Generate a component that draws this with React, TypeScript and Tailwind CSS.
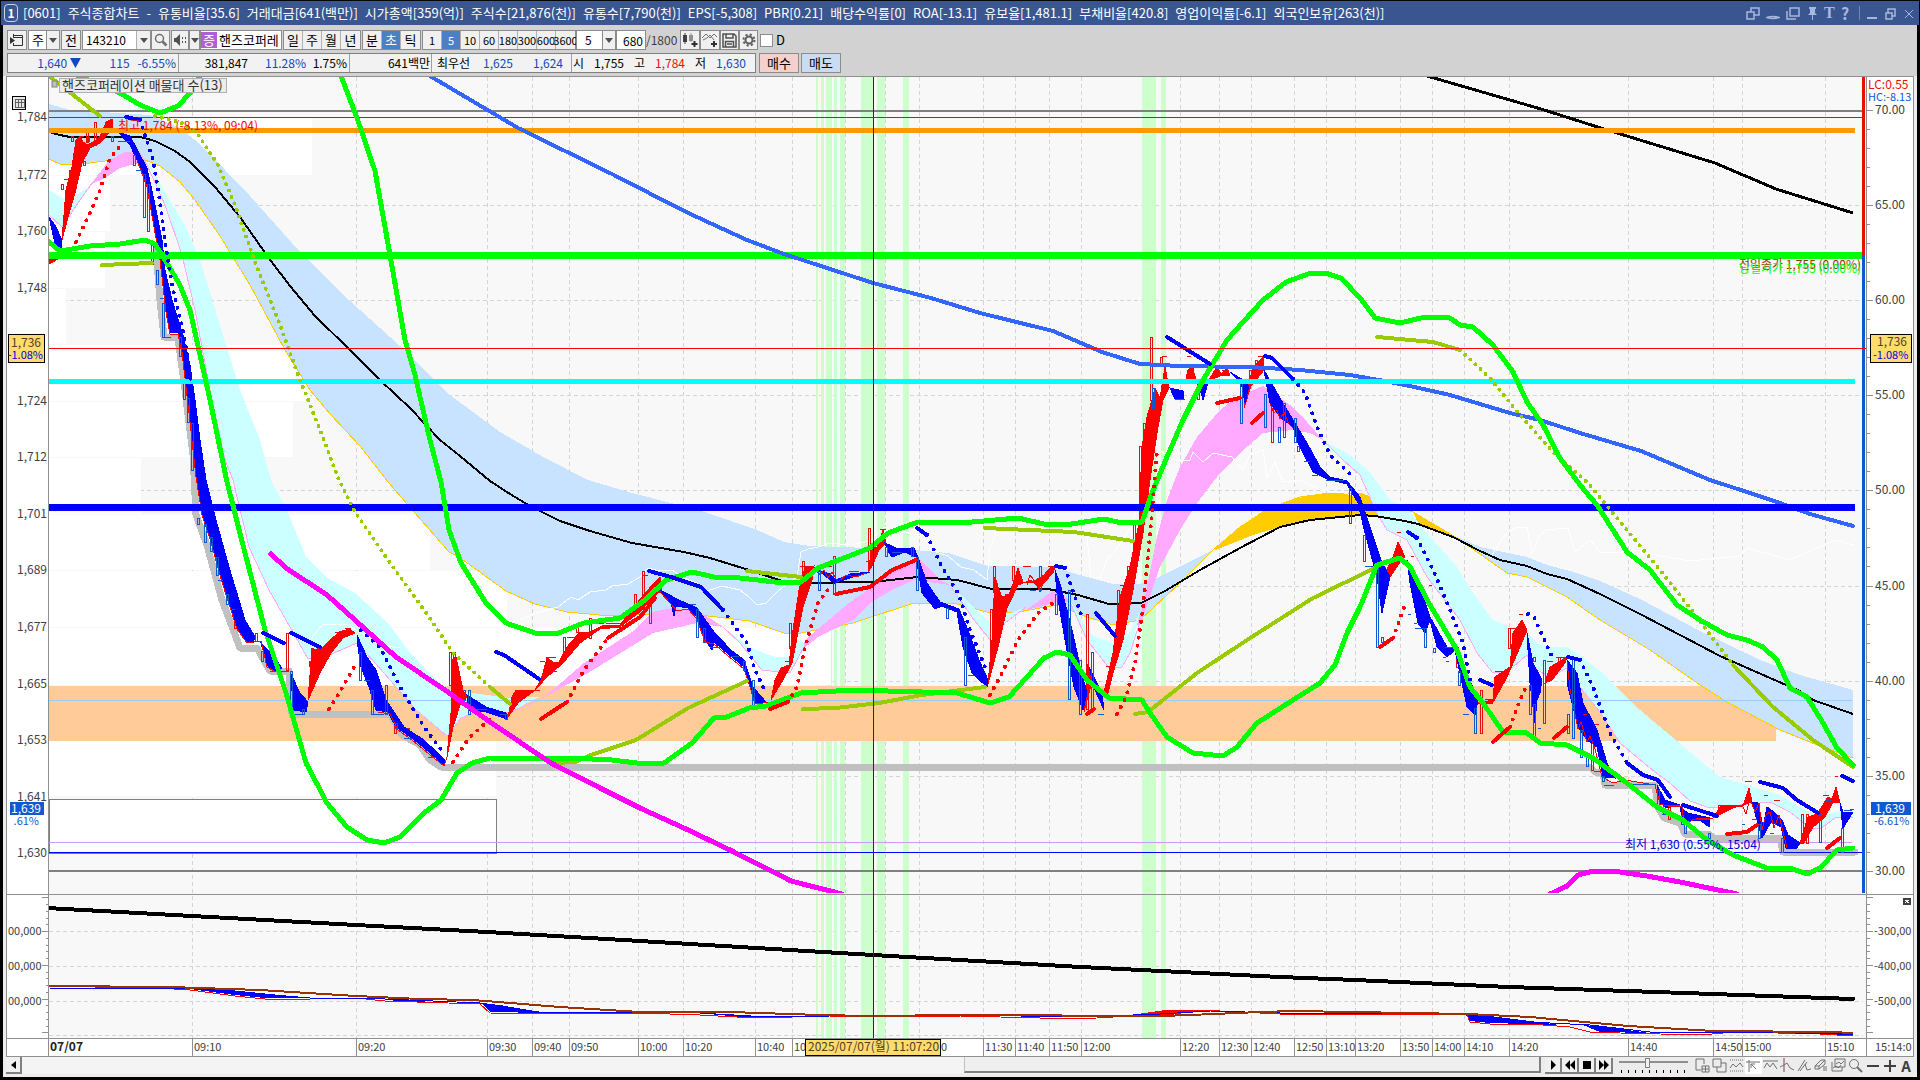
import React from "react";

type Pt = string;

const FONT = "font-['Noto_Sans_CJK_KR',sans-serif]";

const VLINES: [number, string][] = [
  [192, "09:10"], [356, "09:20"], [487, "09:30"], [532, "09:40"], [569, "09:50"],
  [638, "10:00"], [683, "10:20"], [755, "10:40"], [792, "10:50"], [845, ""],
  [885, ""], [919, "11:20"], [983, "11:30"], [1015, "11:40"], [1049, "11:50"],
  [1081, "12:00"], [1180, "12:20"], [1219, "12:30"], [1251, "12:40"], [1294, "12:50"],
  [1326, "13:10"], [1355, "13:20"], [1400, "13:50"], [1432, "14:00"], [1464, "14:10"],
  [1509, "14:20"], [1628, "14:40"], [1713, "14:50"], [1742, "15:00"], [1825, "15:10"],
];

const LEFT_LABELS: [number, string][] = [
  [116, "1,784"], [174, "1,772"], [230, "1,760"], [287, "1,748"], [400, "1,724"],
  [456, "1,712"], [513, "1,701"], [569, "1,689"], [626, "1,677"], [683, "1,665"],
  [739, "1,653"], [796, "1,641"], [852, "1,630"],
];

const RIGHT_LABELS: [number, string][] = [
  [110, "70.00"], [205, "65.00"], [300, "60.00"], [395, "55.00"], [490, "50.00"],
  [586, "45.00"], [681, "40.00"], [776, "35.00"], [871, "30.00"],
];

const VOLUME_BLOCKS = [
  [119, 176, 312], [176, 232, 110], [232, 289, 105], [289, 345, 66], [345, 402, 310],
  [402, 458, 293], [458, 515, 141], [515, 571, 430], [571, 628, 507], [628, 686, 831],
  [741, 797, 496],
];

const STRIPES = [
  [816, 2], [821, 3], [826, 6], [834, 3], [840, 5], [861, 13], [877, 8], [903, 6],
  [1142, 14], [1161, 5],
];

const SKY_CLOUD: Pt =
  "49,104 70,110 150,115 180,128 200,144 250,196 300,252 350,301 400,346 450,395 500,432 545,458 588,480 632,493 671,503 705,512 757,530 784,542 810,546 870,548 914,550 948,553 987,566 1052,567 1087,577 1113,584 1140,584 1157,578 1213,550 1180,583 1140,620 1113,625 1087,617 1057,605 1018,612 987,612 953,603 914,603 853,623 801,633 784,633 749,621 684,613 610,616 567,612 535,604 506,591 459,557 449,552 408,505 388,482 360,446 330,414 310,390 285,350 250,285 220,236 195,200 180,182 160,166 145,160 120,159 90,163 75,165 60,164 49,159";
const SKY_CLOUD_2: Pt =
  "1440,528 1453,535 1480,547 1527,557 1547,565 1570,571 1600,581 1640,599 1700,631 1760,660 1800,675 1853,690 1853,758 1820,746 1780,730 1727,702 1700,685 1650,650 1600,620 1567,597 1527,577 1507,573 1460,540";
const YELLOW_LINE: Pt =
  "49,159 60,164 75,165 90,163 120,159 145,160 160,166 180,182 195,200 220,236 250,285 285,350 310,390 330,414 360,446 388,482 408,505 449,552 459,557 506,591 535,604 567,612 610,616 684,613 749,621 784,633 801,633 853,623 914,603 953,603 987,612 1018,612 1057,605 1087,617 1113,625 1140,620 1180,583 1213,550 1240,527 1270,508 1300,497 1330,493 1360,493 1385,503 1413,512 1447,532 1460,540 1507,573 1527,577 1567,597 1600,620 1650,650 1700,685 1727,702 1780,730 1820,746 1853,758";
const GOLD: Pt[] = [
  "1213,551 1240,527 1263,511 1293,499 1320,494 1357,493 1373,497 1380,517 1353,516 1297,522 1253,535",
  "1413,512 1430,522 1447,532 1455,537 1440,531 1420,527",
];

const CYAN_CLOUDS: Pt[] = [
  "49,190 62,198 75,196 90,186 80,200 70,215 62,227 49,215",
  "147,160 170,201 185,225 200,260 220,325 240,390 260,440 271,480 286,508 306,557 327,578 355,593 388,623 408,650 433,677 449,690 510,698 539,697 508,713 482,710 461,718 447,736 416,710 384,673 357,643 327,656 308,659 290,627 269,590 249,547 233,480 225,460 210,390 195,310 182,255 165,205",
  "723,627 749,647 775,657 790,657 800,640 805,645 790,673 762,670 740,643",
  "950,585 961,595 979,613 992,623 1005,615 1026,607 1005,623 992,642 974,620",
  "1070,600 1091,635 1113,643 1130,632 1140,612 1130,653 1122,667 1109,668 1087,640",
  "1323,440 1350,455 1370,472 1390,500 1407,508 1427,533 1457,567 1473,593 1493,620 1513,628 1527,633 1537,643 1547,647 1567,647 1580,655 1600,671 1640,710 1690,752 1720,777 1750,786 1780,795 1800,807 1820,817 1835,812 1853,810 1853,817 1835,818 1820,829 1810,828 1790,812 1770,802 1740,805 1710,808 1690,801 1670,783 1650,768 1620,743 1600,712 1580,687 1567,668 1550,677 1537,670 1527,655 1507,672 1493,673 1477,653 1460,620 1427,577 1407,540 1387,530 1377,513 1360,475 1343,460",
];
const PINK_LINES: Pt[] = [
  "49,215 62,227 70,215 80,200 90,186 110,160",
  "140,153 147,165 165,205 182,255 195,310 210,390 225,460 233,480 249,547 269,590 290,627 308,659 327,656 357,643 384,673 416,710 447,736 461,718 482,710 508,713 539,700",
  "723,627 740,643 762,670 790,673 805,645",
  "950,585 974,620 992,642 1005,623 1026,607",
  "1070,602 1087,640 1109,668 1122,667 1130,653 1143,612",
  "1323,440 1343,460 1360,475 1377,513 1387,530 1407,540 1427,577 1460,620 1477,653 1493,673 1507,672 1527,655 1537,670 1550,677 1567,668 1580,687 1600,712 1620,743 1650,768 1670,783 1690,801 1710,808 1740,805 1770,802 1790,812 1810,828 1820,829 1835,818 1853,817",
];
const PINK_CLOUDS: Pt[] = [
  "90,185 110,160 125,152 140,152 147,165 135,164 120,168 105,178",
  "539,700 555,688 584,663 632,632 653,612 672,608 697,610 723,627 697,623 653,633 588,673",
  "805,640 849,603 896,570 918,558 940,580 950,585 914,580 892,590 870,603 853,620 818,637 803,649",
  "1026,610 1057,588 1070,602 1057,602",
  "1137,625 1143,607 1157,537 1167,500 1180,467 1197,437 1220,410 1237,397 1263,386 1280,398 1293,407 1307,422 1323,440 1310,433 1293,430 1263,433 1240,453 1220,473 1197,503 1180,530 1160,567 1142,620",
];

const BLACK_MA: Pt =
  "49,132 60,135 70,137 90,137 140,137 155,141 175,151 190,162 215,187 240,217 268,257 290,286 315,316 350,350 380,380 410,408 440,440 460,456 490,481 510,494 530,506 560,521 590,531 632,543 684,552 710,558 749,570 782,581 801,583 873,582 918,577 957,580 992,589 1048,589 1078,595 1109,604 1141,603 1165,591 1200,570 1240,548 1280,527 1310,520 1360,515 1375,516 1405,521 1418,524 1453,537 1480,551 1500,560 1527,566 1547,574 1567,579 1600,594 1640,614 1720,656 1770,678 1800,691 1813,700 1853,714";
const BLUE_MA: Pt =
  "430,76 518,128 612,174 686,212 747,240 784,254 873,283 931,298 980,313 1053,331 1102,352 1140,364 1180,366 1250,367 1300,370 1350,375 1390,382 1410,386 1450,395 1510,413 1540,420 1580,433 1641,451 1710,480 1750,493 1780,503 1810,514 1853,526";
const GREEN_BANDS: Pt[] = [
  "74,74 120,93 140,105 160,113 178,106 190,93 200,76",
  "341,76 357,118 375,171 390,255 405,340 415,375 430,440 441,482 449,530 461,563 486,603 506,623 535,633 559,633 584,623 620,618 645,600 666,580 692,572 714,577 740,578 784,583 801,582 818,568 870,548 888,533 918,522 961,523 1018,518 1044,524 1065,525 1104,519 1122,523 1142,522 1152,493 1167,457 1183,420 1203,380 1227,340 1243,322 1263,300 1286,282 1308,274 1325,273 1341,278 1360,298 1375,318 1400,323 1425,317 1450,318 1460,325 1473,327 1493,345 1513,372 1527,402 1543,425 1560,458 1580,485 1597,505 1627,552 1650,570 1677,605 1700,620 1727,635 1747,640 1763,647 1777,660 1790,688 1807,697 1823,723 1837,748 1853,765",
  "49,242 60,251 90,246 120,244 145,240 155,244 165,260 180,285 190,310 200,355 210,400 227,482 245,553 265,630 286,693 306,763 327,803 347,827 367,840 384,843 400,837 424,813 441,800 457,773 472,763 490,758 531,759 571,758 612,760 645,764 664,763 692,743 714,718 727,717 749,708 766,706 801,693 853,690 957,693 990,703 1009,697 1044,658 1057,652 1070,655 1087,680 1109,698 1142,700 1150,713 1167,737 1193,753 1223,756 1237,747 1257,723 1293,700 1320,683 1335,665 1347,633 1360,607 1377,565 1400,558 1410,567 1430,605 1457,650 1470,687 1483,703 1503,732 1527,733 1540,743 1567,745 1593,758 1627,783 1657,807 1683,820 1707,840 1733,855 1767,868 1790,868 1807,874 1820,868 1837,850 1853,848",
];
const OLIVE_SOLID: Pt[] = [
  "49,76 100,116",
  "102,265 152,263",
  "490,687 510,704",
  "555,763 576,762 588,756 636,740 688,708 747,681",
  "747,571 801,577",
  "803,709 836,708 879,703 922,695 985,687",
  "985,528 1074,532 1133,541",
  "1135,714 1148,712 1197,673 1247,640 1313,598 1375,568",
  "1377,337 1433,342 1460,350",
  "1733,665 1773,707 1813,740 1853,767",
];
const OLIVE_DOTS: Pt[] = [
  "155,116 180,122 197,133 218,165 235,205 255,262 280,325 297,372 320,430 339,480 355,512 388,560 429,617 453,653 490,687",
  "1460,350 1490,378 1520,415 1553,452 1587,482 1627,530 1660,570 1690,608 1733,665",
];
const MAGENTA: Pt[] = [
  "271,554 286,568 327,595 355,620 396,657 445,690 490,722 551,763 604,790 640,808 686,829 730,850 791,881 842,894",
  "1550,894 1567,886 1578,875 1593,871 1613,871 1647,876 1680,882 1737,894",
];
const SUPPORT: Pt =
  "156,250 160,300 164,337 178,338 185,390 193,455 196,515 207,545 222,600 240,648 257,648 270,671 289,671 292,714 390,714 402,735 420,745 430,760 441,767 1590,767 1595,772 1603,773 1605,785 1655,785 1658,807 1664,818 1680,823 1685,834 1708,834 1714,838 1780,838 1783,852 1855,852";

const PRICE_BLUE: Pt[] = [
  "49,217 55,225 61,238 62,250 56,248 52,230",
  "118,132 130,136 140,155 147,168 155,205 162,240 165,270 172,300 183,335 190,365 195,400 200,440 206,480 216,520 229,567 245,620 255,637 253,642 247,642 237,627 222,580 210,537 202,513 196,475 190,420 182,350 178,332 170,333 166,310 160,258 154,225 147,185 137,160 130,145",
  "261,643 271,653 282,668 276,672 267,665",
  "290,672 300,693 308,702 306,712 294,710",
  "357,635 367,657 376,670 386,700 404,727 424,740 445,760 444,765 429,752 412,738 396,727 388,712 376,710 369,687 361,667 358,647",
  "467,695 486,707 506,713 507,719 486,712 469,710",
  "660,590 679,600 697,608 714,632 731,650 744,660 753,687 766,702 755,702 751,687 744,667 727,653 714,642 712,650 705,640 697,617 688,608 676,606 674,616 671,603",
  "818,570 830,574 836,580 850,574 870,572 850,578 834,583",
  "885,543 896,548 914,548 920,563 927,583 940,602 959,609 968,630 979,660 988,680 987,687 972,673 963,647 957,612 942,606 935,609 922,593 916,557 905,552 892,557 888,551",
  "1055,570 1061,587 1072,630 1081,670 1087,693 1083,710 1074,687 1065,640 1057,593",
  "1089,667 1102,693 1104,710 1095,690",
  "1170,388 1183,391 1183,399 1175,399",
  "1198,382 1208,383 1203,400",
  "1230,372 1243,380 1249,386 1245,403 1241,382",
  "1264,370 1280,398 1293,420 1307,443 1320,467 1330,477 1347,481 1360,497 1370,527 1382,563 1390,577 1382,613 1377,577 1365,533 1358,503 1347,484 1327,479 1313,472 1298,443 1293,427 1280,417 1270,403",
  "1407,560 1420,587 1430,617 1447,647 1457,648 1463,663 1478,700 1475,715 1467,707 1460,673 1455,650 1447,657 1437,647 1430,620 1425,633 1418,623 1410,583",
  "1527,633 1533,663 1542,680 1540,693 1537,700 1535,723 1530,683",
  "1567,660 1577,673 1583,703 1597,730 1607,763 1615,778 1603,777 1597,747 1587,740 1578,727 1568,687",
  "1657,785 1665,800 1680,805 1667,808 1660,803",
  "1680,807 1688,813 1710,818 1709,827 1700,820 1690,820 1683,823",
  "1752,802 1758,803 1763,827 1767,807 1775,813 1782,820 1788,835 1800,843 1797,848 1786,848 1781,827 1771,822 1762,838",
  "1840,803 1843,812 1853,812 1843,828",
];
const PRICE_RED: Pt[] = [
  "49,264 49,258 58,259",
  "62,240 66,190 72,167 76,140 80,136 83,142 87,145 97,140 102,133 106,122 112,119 113,128 100,143 90,148 82,163 75,193 70,210",
  "308,700 312,650 322,648 339,632 349,629 355,633 343,638 331,653 320,673",
  "447,757 451,713 452,660 456,657 463,690 467,697 461,702 453,727",
  "508,717 512,697 516,690 535,690 541,680 547,658 553,662 559,662 567,647 580,632 588,633 604,625 620,625 633,608 645,593 660,577 662,590 653,597 640,612 620,627 600,629 580,643 563,663 547,677 535,690 518,703",
  "771,700 775,680 781,668 789,665 792,637 799,590 805,567 814,566 812,580 803,607 792,663 783,680",
  "868,572 872,548 877,547 883,530 886,543 879,550 872,566",
  "988,684 992,640 995,577 999,590 1002,597 1009,595 1015,578 1018,568 1023,582 1031,583 1044,575 1050,568 1055,567 1053,573 1039,588 1031,580 1018,585 1007,608 998,647",
  "1084,712 1088,664 1092,682 1087,700",
  "1104,693 1113,653 1120,597 1130,567 1139,523 1142,447 1147,417 1152,400 1155,388 1160,398 1165,367 1169,388 1163,400 1157,433 1150,480 1143,533 1133,590 1123,640 1113,673 1107,697",
  "1185,383 1188,370 1192,365 1197,384",
  "1208,381 1217,367 1221,374 1227,368 1230,375 1220,376",
  "1244,408 1247,390 1253,367 1263,357 1264,370 1251,386",
  "1383,577 1393,557 1398,542 1405,557 1400,562 1390,577",
  "1478,703 1493,700 1495,677 1510,667 1513,633 1522,620 1527,630 1520,647 1507,677 1492,704",
  "1545,683 1550,667 1567,657 1565,663 1552,680",
  "1713,818 1720,807 1743,806 1749,788 1752,802 1733,808",
  "1800,843 1808,817 1817,814 1828,797 1832,799 1836,787 1840,803 1833,802 1825,817 1813,827 1804,843",
];
const FAST_RED: Pt[] = [
  "137,160 147,187 154,227 160,260 166,312 170,334 178,334 182,352 190,422 196,477 202,515 210,539 222,582 237,629 247,643 261,641 267,667 276,672 289,671",
  "378,712 390,714 398,730 412,740 429,754 444,766 447,757",
  "660,592 671,604 677,611 688,609 697,619 705,642 714,644 727,655 744,669 751,690 755,704 771,702",
  "814,567 820,575 824,570 828,578 832,572 838,582 846,575 856,577 866,573",
  "1027,585 1030,575 1036,583 1040,592 1044,580",
  "1270,404 1274,413 1277,410 1280,419 1284,412 1289,424 1293,428",
  "1567,662 1570,689 1578,729 1581,722 1587,742 1590,736 1595,749 1602,777 1613,783 1625,780 1655,785 1660,804 1668,806 1682,807 1684,824 1698,818 1713,818",
  "1743,807 1746,814 1750,799 1755,812 1759,803 1762,830 1766,815 1770,812 1774,828 1779,815 1784,836 1787,848",
];

const BLUE_DOTS: Pt[] = [
  "140,120 147,141 153,160 160,202 166,248 173,290 183,330 188,360 193,400",
  "361,630 380,647 400,687 424,727 445,755",
  "723,610 747,643 755,670 766,693",
  "927,535 942,567 959,595 970,630 987,672",
  "1065,568 1083,620",
  "1293,379 1305,393 1317,427 1330,455 1350,474",
  "1417,538 1433,570 1450,610 1463,643 1470,680",
  "1528,614 1534,617 1552,657",
  "1580,660 1593,687 1610,733 1627,763",
];
const BLUE_SOLID_DOTS: Pt[] = [
  "126,117 140,120", "263,633 284,643", "291,633 320,647", "496,652 504,655 539,679",
  "649,571 671,577 701,587 723,610", "917,528 927,535", "1056,566 1065,568",
  "1096,613 1115,636", "1167,337 1210,364", "1265,356 1272,358 1293,379",
  "1408,532 1417,538", "1480,680 1492,685", "1568,657 1580,660",
  "1627,763 1643,775 1658,780 1670,797", "1683,805 1717,816",
  "1760,782 1783,788 1797,800 1818,813", "1842,776 1853,781",
];
const RED_DOTS: Pt[] = [
  "76,242 90,213 100,190 110,158 123,143",
  "329,709 341,690 357,662",
  "453,762 469,738 494,715",
  "567,702 584,670 608,638",
  "788,702 797,687 805,647 818,603 829,588",
  "990,695 1000,677 1018,640 1039,612 1053,603",
  "1117,714 1126,697 1135,663 1143,608 1152,513 1157,450",
  "1393,638 1406,602",
  "1510,727 1520,700 1526,687",
];
const RED_SOLID_DOTS: Pt[] = [
  "541,719 567,702", "608,638 640,617 655,598", "770,709 788,702",
  "836,594 870,587 892,570 916,560", "1087,714 1094,709", "1217,403 1240,398",
  "1252,423 1263,413", "1380,647 1393,638", "1493,742 1510,727", "1554,738 1567,727",
  "1727,834 1747,832 1757,825", "1827,848 1840,838",
];

const WHITE_LINES: Pt[] = [
  "520,620 540,612 558,607 571,597 578,600 590,592 606,590 612,586 628,584 640,577 648,568 660,571 672,570 684,578 697,583 704,592 722,586 740,590 748,596 757,605 766,603 779,590 797,577 801,552 808,549 818,547 830,543 850,545 870,541 884,527 892,530 914,534 927,536 930,550 948,556 961,567 974,570 987,580 990,548 996,532",
  "1087,535 1091,577 1100,578 1107,560 1124,540 1137,510",
  "1145,464 1151,440 1160,450 1172,460 1190,460 1193,452 1203,462 1213,453 1232,457 1243,470 1250,455 1263,450 1267,478 1275,462 1283,482 1300,480 1320,490 1344,493 1360,497",
  "1490,558 1505,535 1515,528 1527,527 1532,553 1540,535 1546,530 1568,528 1575,552 1590,540 1600,552 1650,554 1690,561 1740,556 1747,548 1790,560 1812,550 1836,540 1853,545",
  "310,640 322,625 345,624 362,633 380,645 400,648",
];

const CANDLES_RED: [number, number, number][] = [
  [62, 184, 189], [70, 170, 178], [72, 136, 141], [87, 131, 142], [95, 122, 145], [256, 633, 641],
  [287, 633, 670], [310, 661, 666], [312, 648, 656], [235, 618, 628], [395, 723, 733], [408, 728, 735],
  [450, 652, 685], [454, 652, 666], [564, 637, 652], [577, 623, 632], [590, 618, 638],
  [635, 594, 612], [643, 571, 596], [803, 561, 585], [790, 623, 648], [834, 556, 594],
  [869, 528, 566], [994, 566, 592], [991, 609, 660], [1013, 566, 580], [1087, 614, 709],
  [1118, 590, 620], [1128, 566, 590], [1134, 523, 555], [1140, 446, 500], [1144, 423, 445],
  [1151, 337, 400], [1161, 357, 364], [1192, 366, 380], [1250, 370, 385], [1272, 389, 442], [1279, 398, 411],
  [1256, 360, 366], [1384, 567, 574], [1457, 647, 667], [1481, 690, 733], [1509, 628, 648],
  [1534, 657, 661], [1592, 723, 770], [1559, 657, 664], [1664, 805, 814], [1669, 805, 819], [1719, 805, 814],
  [1802, 814, 840], [1807, 814, 843],
];
const CANDLES_BLUE: [number, number, number][] = [
  [84, 161, 165], [88, 137, 141], [112, 136, 141], [134, 155, 165], [144, 174, 217], [148, 184, 231],
  [152, 241, 264], [157, 270, 284], [163, 303, 337], [180, 337, 356], [184, 380, 399], [188, 398, 422],
  [192, 423, 470], [198, 518, 524], [205, 524, 542], [211, 537, 551], [217, 557, 575], [227, 594, 604],
  [262, 651, 661], [291, 671, 714], [303, 709, 714], [360, 652, 680], [372, 690, 714], [386, 685, 714],
  [396, 723, 728], [464, 690, 700], [469, 690, 714], [506, 714, 719], [650, 604, 623], [697, 609, 637],
  [704, 628, 642], [744, 661, 670], [753, 680, 709], [819, 566, 590], [886, 547, 556], [912, 547, 556], [917, 557, 590],
  [947, 608, 618], [965, 637, 685], [1040, 566, 590], [1056, 594, 614], [1069, 590, 699], [1080, 660, 714], [1092, 652, 708],
  [1153, 388, 408], [1198, 389, 399], [1241, 380, 423], [1265, 394, 427], [1279, 427, 442],
  [1284, 403, 437], [1295, 418, 442], [1298, 446, 451], [1350, 488, 523], [1364, 535, 561],
  [1377, 567, 647], [1382, 637, 642], [1425, 628, 647], [1434, 648, 652], [1459, 671, 685],
  [1475, 708, 733], [1530, 685, 714], [1534, 704, 738], [1544, 660, 723], [1568, 714, 733],
  [1573, 657, 738], [1581, 730, 757], [1587, 757, 766], [1603, 776, 781], [1658, 790, 809],
  [1682, 815, 824], [1685, 824, 833], [1709, 833, 838], [1759, 824, 838], [1782, 838, 852], [1820, 814, 842],
  [1842, 828, 852],
];
const TICKS_RED: [number, number, number][] = [
  [64, 179, 8], [79, 136, 5], [335, 632, 6], [345, 628, 6], [532, 690, 8], [540, 661, 5], [546, 657, 10],
  [567, 637, 8], [594, 623, 10], [606, 623, 14], [642, 575, 6], [785, 661, 8], [800, 590, 6], [800, 566, 10],
  [826, 566, 6], [866, 561, 6], [880, 529, 6], [1005, 594, 6], [1023, 566, 8], [1048, 566, 12], [1106, 666, 4],
  [1120, 585, 6], [1162, 356, 5], [1187, 356, 4], [1215, 365, 6], [1222, 370, 6], [1258, 356, 6], [1397, 532, 4],
  [1411, 556, 3], [1429, 585, 3], [1445, 647, 12], [1485, 699, 8], [1495, 671, 12], [1511, 628, 14],
  [1519, 614, 4], [1547, 661, 6], [1556, 657, 12], [1583, 714, 4], [1595, 724, 4], [1720, 805, 22],
  [1745, 781, 7], [1764, 795, 4], [1774, 800, 6], [1823, 795, 6], [1835, 776, 3], [1850, 809, 4], [1668, 805, 12], [1692, 819, 18],
];
const TICKS_BLUE: [number, number, number][] = [
  [118, 141, 12], [136, 170, 6], [160, 298, 4], [165, 337, 6], [218, 580, 5], [232, 609, 3], [270, 671, 18], [295, 714, 10],
  [364, 680, 6], [372, 714, 12], [404, 738, 8], [428, 757, 8], [475, 709, 12], [500, 714, 8], [553, 671, 4], [690, 604, 6],
  [710, 647, 10], [731, 656, 8], [849, 571, 10], [892, 552, 10], [968, 675, 6], [1098, 714, 6], [1030, 590, 6],
  [1175, 399, 10], [1225, 380, 14], [1304, 461, 6], [1312, 475, 6], [1326, 480, 18], [1365, 566, 8], [1408, 614, 3],
  [1414, 623, 3], [1415, 628, 10], [1443, 657, 3], [1446, 661, 3], [1463, 714, 6], [1538, 728, 3], [1594, 771, 8],
  [1604, 785, 10], [1632, 784, 24], [1662, 814, 6], [1742, 824, 3], [1752, 819, 5], [1770, 833, 4], [1826, 800, 6], [1844, 810, 8],
];

function Lines({ list, color, width, dots }: { list: Pt[]; color: string; width: number; dots?: string }) {
  return (
    <g fill="none" stroke={color} strokeWidth={width} strokeLinecap={dots || width > 3 ? "round" : "butt"} strokeLinejoin="round" strokeDasharray={dots}>
      {list.map((p) => <polyline key={p} points={p} />)}
    </g>
  );
}

function HLine({ y, x2 = 1863, color, w = 1 }: { y: number; x2?: number; color: string; w?: number }) {
  return <rect x={49} y={y} width={x2 - 49} height={w} fill={color} />;
}

function Plot() {
  return (
    <svg viewBox="49 77 1817 961" preserveAspectRatio="none" className="block min-w-0 flex-1 h-full bg-[#f8f8f8]" shapeRendering="crispEdges" role="img" aria-label="핸즈코퍼레이션 주가 차트">
      <defs>
        <clipPath id="main-panel"><rect x={49} y={77} width={1817} height={816} /></clipPath>
      </defs>
      <g stroke="#d4d4d4" strokeDasharray="4 3">
        {VLINES.map(([x]) => <line key={x} x1={x + 0.5} x2={x + 0.5} y1={77} y2={1038} />)}
        {[205, 300, 395, 490, 586, 681, 776].map((y) => <line key={y} x1={49} x2={1863} y1={y + 0.5} y2={y + 0.5} />)}
        {[931, 966, 1001, 1035].map((y) => <line key={y} x1={49} x2={1863} y1={y + 0.5} y2={y + 0.5} />)}
      </g>
      {STRIPES.map(([x, w]) => <rect key={x} x={x} y={77} width={w} height={961} fill="#ccffcc" />)}
      {VOLUME_BLOCKS.map(([a, b, x]) => <rect key={a} x={49} y={a} width={x - 49} height={b - a - 1} fill="#fff" />)}
      <rect x={49} y={799} width={447} height={54} fill="#fff" stroke="#808080" />
      <rect x={49} y={686} width={1727} height={55} fill="#ffcc99" />
      <g clipPath="url(#main-panel)">
        <polygon points={SKY_CLOUD} fill="#c8e3ff" />
        <polygon points={SKY_CLOUD_2} fill="#c8e3ff" />
        {GOLD.map((p) => <polygon key={p} points={p} fill="#ffcc00" />)}
        <Lines list={[YELLOW_LINE]} color="#ffcc00" width={1} />
        {CYAN_CLOUDS.map((p) => <polygon key={p} points={p} fill="#ccffff" />)}
        {PINK_CLOUDS.map((p) => <polygon key={p} points={p} fill="#ffaaff" />)}
        <Lines list={PINK_LINES} color="#ffaaff" width={1} />
        <Lines list={WHITE_LINES} color="#ffffff" width={1} />
        <Lines list={[SUPPORT]} color="#c0c0c0" width={7} />
        <HLine y={110} color="#808080" w={2} />
        <HLine y={870} color="#808080" w={2} />
        <HLine y={700} x2={1852} color="#99ccff" />
        <HLine y={842} x2={1852} color="#cc99ff" />
        <HLine y={852} color="#0000ff" />
        <HLine y={117} color="#ff0000" />
        <Lines list={["1427,76 1541,109 1604,129 1715,163 1776,189 1853,213"]} color="#000000" width={3} />
        <Lines list={[BLACK_MA]} color="#000000" width={2} />
        <g fill="none" stroke="#e01010">
          {CANDLES_RED.map(([x, a, b]) => <rect key={`${x}-${a}`} x={x - 0.5} y={a + 0.5} width={2} height={b - a} />)}
        </g>
        {PRICE_RED.map((p) => <polygon key={p} points={p} fill="#ff0000" stroke="#ff0000" strokeWidth={1} />)}
        {PRICE_BLUE.map((p) => <polygon key={p} points={p} fill="#0000ff" stroke="#0000ff" strokeWidth={1} />)}
        <Lines list={FAST_RED} color="#ff0000" width={1} />
        <g fill="none" stroke="#1058d0">
          {CANDLES_BLUE.map(([x, a, b]) => <rect key={`${x}-${a}`} x={x - 0.5} y={a + 0.5} width={2} height={b - a} />)}
        </g>
        {TICKS_RED.map(([x, y, w]) => <rect key={`${x}-${y}`} x={x} y={y} width={w} height={1} fill="#e01010" />)}
        {TICKS_BLUE.map(([x, y, w]) => <rect key={`${x}-${y}`} x={x} y={y} width={w} height={1} fill="#1058d0" />)}
        <HLine y={128} x2={1855} color="#ff9900" w={5} />
        <HLine y={252} color="#00ff00" w={7} />
        <Lines list={[BLUE_MA]} color="#3366ff" width={4} />
        <HLine y={379} x2={1855} color="#00ffff" w={5} />
        <HLine y={504} x2={1855} color="#0000ff" w={7} />
        <Lines list={OLIVE_SOLID} color="#99cc00" width={4} />
        <Lines list={OLIVE_DOTS} color="#99cc00" width={4} dots="0 7" />
        <Lines list={GREEN_BANDS} color="#00ff00" width={5} />
        <Lines list={RED_DOTS} color="#ff0000" width={4} dots="0 8" />
        <Lines list={RED_SOLID_DOTS} color="#ff0000" width={4} />
        <Lines list={BLUE_DOTS} color="#0000ff" width={4} dots="0 8" />
        <Lines list={BLUE_SOLID_DOTS} color="#0000ff" width={4} />
        <Lines list={MAGENTA} color="#ff00ff" width={5} />
        <rect x={1862} y={77} width={3} height={178} fill="#e81000" />
        <rect x={1862} y={255} width={3} height={638} fill="#1058d0" />
      </g>
      <rect x={49} y={894} width={1817} height={1} fill="#909090" />
      <Lines list={["47,908 192,916 356,925 487,932 640,941 873,955 1081,967 1280,977 1355,980 1509,987 1628,991 1853,999"]} color="#000000" width={4} />
      <g fill="#0000ff">
        <polygon points="190,989 210,988 260,993 310,998 265,998 235,995" />
        <polygon points="385,999 420,1001 440,1003 400,1002" />
        <polygon points="481,1003 500,1005 545,1013 490,1012" />
        <polygon points="690,1012 760,1016 740,1017" />
        <polygon points="1466,1015 1490,1016 1530,1021 1560,1025 1490,1023 1470,1021" />
        <polygon points="1583,1025 1605,1027 1650,1033 1600,1032" />
        <polygon points="1820,1032 1853,1033 1853,1036 1822,1035" />
      </g>
      <polygon points="1130,1015 1165,1010 1205,1010 1170,1015" fill="#ff0000" />
      <Lines list={["50,989 140,987 190,990 235,996 265,999 310,999 356,998 385,1001 480,1004 490,1013 545,1014 640,1013 700,1015 755,1018 830,1016 960,1016 1080,1019 1130,1016 1170,1011 1200,1010 1280,1014 1467,1015 1470,1022 1490,1024 1530,1024 1570,1027 1590,1032 1620,1033 1700,1035 1735,1032 1820,1034 1853,1036"]} color="#ff0000" width={1} />
      <Lines list={["50,988 190,988 310,998 356,998 385,999 480,1003 545,1013 640,1012 700,1013 755,1017 830,1016 960,1015 1080,1017 1160,1014 1210,1011 1280,1013 1467,1014 1530,1022 1590,1025 1650,1032 1735,1032 1853,1034"]} color="#0000ff" width={1} />
      <Lines list={["49,986 170,987 260,990 356,996 420,999 473,1000 560,1007 640,1012 730,1012 820,1015 870,1016 960,1015 1160,1016 1190,1015 1260,1012 1294,1011 1410,1013 1467,1014 1530,1017 1628,1026 1713,1031 1830,1032 1853,1033"]} color="#993300" width={2} />
      <HLine y={348} x2={1866} color="#ff0000" />
      <rect x={873} y={77} width={1} height={961} fill="#800020" />
      <g fontSize={12} shapeRendering="auto">
        <rect x={52} y={81} width={5} height={6} fill="#c0c0c0" stroke="#808080" />
        <rect x={59.5} y={78.5} width={167} height={14} fill="#ececec" stroke="#b0b0b0" />
        <text x={62} y={90} fontSize={13} fill="#333333">핸즈코퍼레이션 매물대 수(13)</text>
        <text x={118} y={130} fill="#ff0000">최고 1,784 (-8.13%, 09:04)</text>
        <text x={1625} y={849} fill="#0000cc">최저 1,630 (0.55%, 15:04)</text>
        <text x={1861} y={269} fill="#993300" textAnchor="end">전일종가 1,755 (0.00%)</text>
        <text x={1861} y={273} fill="#00ff00" textAnchor="end">당일시가 1,755 (0.00%)</text>
      </g>
    </svg>
  );
}

function LeftAxis() {
  return (
    <svg viewBox="7 77 41 961" preserveAspectRatio="none" className="block h-full w-[41px] shrink-0 bg-white" fontSize={12} shapeRendering="crispEdges" aria-label="가격 축">
      <rect x={12.5} y={96.5} width={13} height={13} fill="#e8e8e8" stroke="#000" />
      <path d="M15 99.5h9v8h-9zM18.5 99v9M21.5 99v9M15 102.5h9" fill="none" stroke="#606060" />
      {LEFT_LABELS.map(([y, t]) => <text key={t} x={47} y={y + 5} textAnchor="end" fill="#404040">{t}</text>)}
      <rect x={8.5} y={334.5} width={36} height={28} fill="#ffdc6e" stroke="#000" />
      <text x={41} y={347} textAnchor="end" fill="#504020">1,736</text>
      <text x={43} y={359} textAnchor="end" fontSize={11} fill="#0000e0">-1.08%</text>
      <rect x={10} y={802} width={34} height={13} fill="#1058d0" />
      <text x={41} y={813} textAnchor="end" fill="#fff">1,639</text>
      <text x={39} y={825} textAnchor="end" fontSize={11} fill="#1058d0">.61%</text>
      <rect x={7} y={894} width={41} height={1} fill="#909090" />
      {[931, 966, 1001].map((y) => <text key={y} x={8} y={y + 4} fontSize={11} fill="#404040">00,000</text>)}
      {Array.from({ length: 21 }, (_, i) => (
        <rect key={i} x={i % 5 === 0 ? 42 : 46} y={897 + i * 7 - Math.floor(i / 4)} width={7} height={1} fill="#909090" />
      ))}
    </svg>
  );
}

function RightAxis() {
  return (
    <svg viewBox="1867 77 46 961" preserveAspectRatio="none" className="block h-full w-[46px] shrink-0 bg-white" fontSize={12} shapeRendering="crispEdges" aria-label="지표 축">
      <text x={1868} y={89} fill="#e81000">LC:0.55</text>
      <text x={1868} y={101} fontSize={11} fill="#1058d0">HC:-8.13</text>
      {RIGHT_LABELS.map(([y, t]) => (
        <g key={t}>
          <rect x={1867} y={y} width={6} height={1} fill="#909090" />
          {y < 870 && [1, 2, 3, 4].map((k) => <rect key={k} x={1867} y={y + 19 * k} width={3} height={1} fill="#909090" />)}
          <text x={1875} y={y + 4} fill="#404040">{t}</text>
        </g>
      ))}
      <rect x={1870.5} y={334.5} width={41} height={28} fill="#ffdc6e" stroke="#000" />
      <text x={1877} y={346} fill="#504020">1,736</text>
      <text x={1873} y={359} fontSize={11} fill="#0000e0">-1.08%</text>
      <rect x={1871} y={802} width={40} height={13} fill="#1058d0" />
      <text x={1875} y={813} fill="#fff">1,639</text>
      <text x={1874} y={825} fontSize={11} fill="#1058d0">-6.61%</text>
      <rect x={1867} y={894} width={46} height={1} fill="#909090" />
      <rect x={1903} y={898} width={8} height={7} fill="#404040" />
      <path d="M1905 900l4 3M1909 900l-4 3" stroke="#fff" />
      {["-300,00", "-400,00", "-500,00"].map((t, i) => <text key={t} x={1874} y={935 + i * 35} fontSize={11} fill="#404040">{t}</text>)}
      {Array.from({ length: 21 }, (_, i) => (
        <rect key={i} x={1867} y={897 + i * 7 - Math.floor(i / 4)} width={i % 5 === 0 ? 6 : 3} height={1} fill="#909090" />
      ))}
    </svg>
  );
}

function TimeAxis() {
  return (
    <svg viewBox="7 1039 1906 17" preserveAspectRatio="none" className="block h-[17px] w-full bg-white" fontSize={11} shapeRendering="crispEdges" aria-label="시간 축">
      <rect x={48} y={1039} width={1} height={17} fill="#909090" />
      <rect x={1866} y={1039} width={1} height={17} fill="#909090" />
      <text x={50} y={1051} fontSize={12} fill="#202020" fontWeight="bold">07/07</text>
      {VLINES.map(([x, t]) => (
        <g key={x}>
          <rect x={x} y={1039} width={1} height={17} fill="#909090" />
          {x === 792 ? <text x={794} y={1051} fill="#404040">10</text>
            : x === 919 ? <text x={941} y={1051} fill="#404040">0</text>
            : <text x={x + 2} y={1051} fill="#404040">{t}</text>}
        </g>
      ))}
      <text x={1875} y={1051} fill="#404040">15:14:0</text>
      <rect x={805.5} y={1039.5} width={135} height={16} fill="#ffdc6e" stroke="#000" />
      <text x={808} y={1051} fontSize={12} fill="#504020">2025/07/07(월) 11:07:20</text>
    </svg>
  );
}

const TITLE = [
  "[0601]", "주식종합차트", "-", "유통비율[35.6]", "거래대금[641(백만)]", "시가총액[359(억)]",
  "주식수[21,876(천)]", "유통수[7,790(천)]", "EPS[-5,308]", "PBR[0.21]", "배당수익률[0]",
  "ROA[-13.1]", "유보율[1,481.1]", "부채비율[420.8]", "영업이익률[-6.1]", "외국인보유[263(천)]",
];

const WINDOW_ICONS: { label: string; x: string; d: string; fill?: boolean }[] = [
  { label: "화면 복사", x: "ml-0", d: "M1 6h7v7H1zM5 6V2h8v7H8" },
  { label: "내리기", x: "ml-[6px]", d: "M1 11.5q6-2 12 0q-6 2-12 0z" },
  { label: "겹치기", x: "ml-[6px]", d: "M4 2h9v8H4zM1 5v8h9" },
  { label: "고정", x: "ml-[5px]", d: "M4 1h7v2h-1v4l2 2H8v5H7V9H3l2-2V3H4z", fill: true },
];

function TitleBar() {
  return (
    <header className="mx-px flex h-6 shrink-0 items-center bg-[#3a5690] pl-[3px] pr-[5px] text-white">
      <span className="flex h-[18px] w-[14px] items-center justify-center rounded-sm border border-[#c8d4ec] text-[12px] font-bold leading-none">1</span>
      <h1 className="ml-[5px] flex min-w-0 flex-1 gap-[7px] overflow-hidden whitespace-nowrap text-[13px] leading-5">
        {TITLE.map((t) => <span key={t}>{t}</span>)}
      </h1>
      <div className="flex items-center text-[#a8b8dc]">
        {WINDOW_ICONS.map((i) => (
          <button key={i.label} aria-label={i.label} className={i.x}>
            <svg width="14" height="15" viewBox="0 0 14 15" fill={i.fill ? "currentColor" : "none"} stroke="currentColor" strokeWidth={i.fill ? 0 : 1.5}><path d={i.d} /></svg>
          </button>
        ))}
        <button aria-label="글꼴" className="ml-[5px] w-[10px] font-['Liberation_Serif',serif] text-[16px] font-bold leading-none">T</button>
        <button aria-label="도움말" className="ml-[6px] w-[10px] text-[16px] font-bold leading-none">?</button>
        <span className="ml-[9px] h-[14px] w-px bg-[#7088b8]" />
        <button aria-label="최소화" className="ml-[7px]"><svg width="11" height="13" viewBox="0 0 11 13"><path d="M0 10h10v2H0z" fill="currentColor" /></svg></button>
        <button aria-label="이전 크기" className="ml-[7px]"><svg width="11" height="13" viewBox="0 0 11 13" fill="none" stroke="currentColor" strokeWidth="1.5"><path d="M1 6h6v6H1zM3 6V2h7v7H7" /></svg></button>
        <button aria-label="닫기" className="ml-[8px]"><svg width="10" height="13" viewBox="0 0 10 13" stroke="currentColor"><path d="M1 3l8 8M9 3l-8 8" /></svg></button>
      </div>
    </header>
  );
}

const BOX = "h-5 shrink-0 border border-[#8c8c8c]";
const BTN = "flex h-5 shrink-0 items-center justify-center border border-[#8c8c8c] bg-[#f0f0f0]";

function Arrow() {
  return <svg width="8" height="5" viewBox="0 0 8 5" className="pointer-events-none shrink-0"><path d="M0 0h8L4 5z" fill="#505050" /></svg>;
}

function Group({ items, active, name, small }: { items: string[]; active?: string; name: string; small?: boolean }) {
  return (
    <div role="group" aria-label={name} className={small ? "flex h-5 shrink-0 divide-x divide-[#b0b0b0] border border-[#8c8c8c] text-[11px]" : "flex h-5 shrink-0 divide-x divide-[#b0b0b0] border border-[#8c8c8c]"}>
      {items.map((t) => (
        <button key={t} aria-pressed={t === active} className={t === active ? "flex w-[19px] items-center justify-center bg-[#4a80c4] text-white" : "flex w-[19px] items-center justify-center bg-[#f0f0f0]"}>{t}</button>
      ))}
    </div>
  );
}

function Toolbar() {
  return (
    <div className="flex items-center text-[13px] leading-[18px] text-black">
      <button aria-label="패널 열기" className={`${BTN} w-[20px]`}>
        <svg width="14" height="14" viewBox="0 0 14 14" fill="none" stroke="#303030"><path d="M3.5 2.5h9v10h-9M3.5 1v3M3.5 10v3M3 4.5h9" /><path d="M0 4l5 3.5L0 11z" fill="#303030" stroke="none" /></svg>
      </button>
      <label className={`${BOX} ml-px flex w-[32px] items-center bg-white`}>
        <select aria-label="시장" className="w-[17px] appearance-none bg-white pl-[3px]"><option>주</option></select>
        <span className="flex h-full flex-1 items-center justify-center border-l border-[#8c8c8c] bg-[#f0f0f0]"><Arrow /></span>
      </label>
      <button className={`${BTN} ml-px w-[20px]`}>전</button>
      <div className={`${BOX} ml-px flex w-[69px] items-center bg-white`}>
        <input aria-label="종목코드" defaultValue="143210" className="w-[53px] bg-white pl-[3px] text-[12px] outline-none" />
        <button aria-label="종목 목록" className="flex h-full flex-1 items-center justify-center border-l border-[#b0b0b0] bg-[#f0f0f0]"><Arrow /></button>
      </div>
      <button aria-label="종목 검색" className={`${BTN} w-[19px]`}>
        <svg width="14" height="14" viewBox="0 0 14 14" fill="none" stroke="#707070" strokeWidth="1.5"><circle cx="5.5" cy="5.5" r="4" /><path d="M8.5 8.5l4 4" strokeWidth="2.5" /></svg>
      </button>
      <button aria-label="소리" className={`${BTN} ml-px w-[18px]`}>
        <svg width="14" height="12" viewBox="0 0 14 12" fill="#505050"><path d="M1 4h2l4-4v12L3 8H1z" /><path d="M9 3h1v2H9zM9 7h1v2H9zM12 3h1v2h-1zM12 7h1v2h-1z" /></svg>
      </button>
      <button aria-label="소리 설정" className={`${BTN} w-[11px]`}><Arrow /></button>
      <div className={`${BOX} flex w-[82px] items-center whitespace-nowrap bg-white`}>
        <span className="mr-[2px] flex h-[16px] w-[16px] shrink-0 items-center justify-center bg-[#b060d0] text-[13px] text-white">증</span>
        핸즈코퍼레
      </div>
      <div className="ml-px flex gap-px">
        <Group name="주기" items={["일", "주", "월", "년"]} />
        <Group name="분초틱" items={["분", "초", "틱"]} active="초" />
        <Group name="간격" items={["1", "5", "10", "60", "180", "300", "600", "3600"]} active="5" small />
      </div>
      <label className={`${BOX} flex w-[40px] items-center bg-white`}>
        <select aria-label="사용자 간격" className="w-[25px] appearance-none bg-white pl-[8px] text-[12px]"><option>5</option></select>
        <span className="flex h-full flex-1 items-center justify-center border-l border-[#8c8c8c] bg-[#f0f0f0]"><Arrow /></span>
      </label>
      <input aria-label="표시 개수" defaultValue="680" className={`${BOX} w-[30px] bg-white pl-[6px] text-[12px]`} />
      <span className="w-[33px] text-[12px] text-[#404040]">/1800</span>
      <button aria-label="봉 추가" className={`${BTN} ml-px w-[20px]`}>
        <svg width="16" height="16" viewBox="0 0 16 16"><path d="M1 3h4v7H1zM2.5 1h1v11h-1z" fill="#404040" /><path d="M7 3h4v6H7zM8.5 1h1v9h-1z" fill="#909090" /><path d="M12.5 9v6M9.5 12h6" stroke="#303030" strokeWidth="2" /></svg>
      </button>
      <button aria-label="지표 추가" className={`${BTN} w-[20px]`}>
        <svg width="16" height="16" viewBox="0 0 16 16" fill="none" stroke="#707070"><path d="M0 6l4-4 4 4 4-4 3 3M1 8l4-2 3-3 4 5" /><path d="M12 9v6M9 12h6" stroke="#303030" strokeWidth="2" /></svg>
      </button>
      <button aria-label="저장" className={`${BTN} w-[19px]`}>
        <svg width="15" height="15" viewBox="0 0 15 15" fill="none" stroke="#505050" strokeWidth="1.5"><path d="M1 1h11l2 2v11H1zM4 1v4h7V1M3.5 14V8.5h8V14M5 11h5" /></svg>
      </button>
      <button aria-label="설정" className={`${BTN} w-[19px]`}>
        <svg width="14" height="14" viewBox="0 0 14 14" fill="none" stroke="#606060"><circle cx="7" cy="7" r="3.5" strokeWidth="2" /><circle cx="7" cy="7" r="5.5" strokeWidth="2" strokeDasharray="2.2 2.12" /></svg>
      </button>
      <label className="ml-[2px] flex items-center gap-[3px]">
        <input type="checkbox" className="h-[13px] w-[13px] appearance-none border border-[#8c8c8c] bg-white" />
        D
      </label>
    </div>
  );
}

function QuoteRow() {
  const cell = "flex h-full shrink-0 items-center justify-end border-r border-[#a0a0a0]";
  return (
    <div className="flex gap-[3px] text-[12px] leading-[18px] text-black">
      <div className="flex h-5 w-[749px] shrink-0 border border-[#808080] bg-[#f2f2f2] whitespace-nowrap">
        <div className={`${cell} w-[171px] pr-[2px] text-[#1048c0]`}>
          <span className="w-[60px] text-right">1,640</span>
          <svg width="11" height="10" viewBox="0 0 11 10" className="ml-[3px]"><path d="M0 0h11L5.5 10z" fill="#1048c0" /></svg>
          <span className="w-[49px] text-right">115</span>
          <span className="w-[47px] text-right">-6.55%</span>
        </div>
        <div className={`${cell} w-[171px] pr-[2px]`}>
          <span>381,847</span>
          <span className="w-[58px] text-right text-[#1048c0]">11.28%</span>
          <span className="w-[41px] text-right">1.75%</span>
        </div>
        <div className={`${cell} w-[82px] pr-px`}>641백만</div>
        <div className={`${cell} w-[140px] pr-[8px] text-[#1048c0]`}>
          <span className="text-black">최우선</span>
          <span className="w-[43px] text-right">1,625</span>
          <span className="w-[50px] text-right">1,624</span>
        </div>
        <div className="flex items-center pl-px">
          <span className="w-[13px]">시</span>
          <span className="w-[38px] text-right">1,755</span>
          <span className="ml-[10px] w-[13px]">고</span>
          <span className="w-[38px] text-right text-[#e81000]">1,784</span>
          <span className="ml-[10px] w-[13px]">저</span>
          <span className="w-[38px] text-right text-[#1048c0]">1,630</span>
        </div>
      </div>
      <div className="flex gap-[2px] text-[13px]">
        <button className="h-5 w-[40px] border border-[#8c8c8c] bg-[#f6d0cc]">매수</button>
        <button className="h-5 w-[40px] border border-[#8c8c8c] bg-[#c8dcf4]">매도</button>
      </div>
    </div>
  );
}

const PLAYBACK = [
  ["재생", "M5 2l5 5-5 5z"],
  ["되감기", "M7 2v10L2 7zM12 2v10L7 7z"],
  ["정지", "M3 3h8v8H3z"],
  ["빨리감기", "M2 2l5 5-5 5zM7 2l5 5-5 5z"],
];

const TOOLS: [string, React.ReactNode][] = [
  ["차트 추가", <path key="a" d="M1 1h8v5M1 1v11h5M7 8h7v6H7zM10.5 8v6M7 11h7" />],
  ["차트 복제", <path key="b" d="M1 1h8v8H1zM5 9v5h9V5H9" />],
  ["구간 표시", <g key="c"><path d="M1 2h13M1 13h13" strokeDasharray="1 1" /><path d="M1 10l3-4 3 3 4-4 3 4" /></g>],
  ["십자선", <path key="d" d="M3 2v12M0 4h14M5 6l5 5M5 10V6h4" />],
  ["추세선", <path key="e" d="M0 3h15M1 10l3-5 3 4 3-4 4 6" />],
  ["수직선", <g key="f"><path d="M4 0v14" stroke="#804060" /><path d="M0 9l4-2 3-2 3 5 4 2" /></g>],
  ["채널선", <path key="h" d="M1 13L8 2M3 13l7-9M8 6l2 6 4-1" />],
  ["모두 지우기", <path key="i" d="M1 8l6-6h4v4l-6 5H1zM1 8h4l6-6M5 8v3M10 8v5M12 8v5" />],
  ["차트 이미지", <path key="j" d="M4 1h10v8H4zM1 4v9h10V9M2 10l3-2 2 2 3-3M5 6l3-2 2 2 3-3" />],
  ["돋보기", <g key="k"><circle cx="6" cy="6" r="4.5" /><path d="M9 9l5 5" strokeWidth="2" /></g>],
];

function BottomBar() {
  return (
    <div className="flex h-[17px] shrink-0 items-center bg-[#ececec]">
      <button aria-label="왼쪽으로" className="flex h-[17px] w-[16px] shrink-0 items-center justify-center border-b-2 border-r-2 border-[#808080] bg-[#f0f0f0]">
        <svg width="5" height="8" viewBox="0 0 5 8"><path d="M5 0v8L0 4z" fill="#000" /></svg>
      </button>
      <div className="flex h-[17px] min-w-0 flex-1 justify-end bg-[#f4f4f4]">
        <div role="scrollbar" aria-controls="chart" aria-valuenow={100} aria-orientation="horizontal" className="h-[16px] w-[38%] border-b-2 border-r-2 border-[#808080] border-l border-l-[#c0c0c0] bg-[#efefef]" />
      </div>
      <div className="ml-[4px] flex shrink-0">
        {PLAYBACK.map(([label, d]) => (
          <button key={label} aria-label={label} className="flex h-[16px] w-[17px] items-center justify-center border-b-2 border-r-2 border-[#808080] bg-[#f0f0f0]">
            <svg width="14" height="14" viewBox="0 0 14 14"><path d={d} fill="#000" /></svg>
          </button>
        ))}
      </div>
      <label className="relative ml-[6px] block h-[17px] w-[69px] shrink-0">
        <input type="range" aria-label="재생 속도" defaultValue={40} className="absolute inset-0 h-full w-full opacity-0" />
        <svg width="69" height="17" viewBox="0 0 69 17" shapeRendering="crispEdges" className="pointer-events-none">
          <rect x="0" y="4" width="69" height="2" fill="#909090" />
          <rect x="26.5" y="1.5" width="4" height="9" fill="#f0f0f0" stroke="#808080" />
          {Array.from({ length: 10 }, (_, i) => <rect key={i} x={2 + i * 7} y={13} width={1} height={3} fill="#000" />)}
        </svg>
      </label>
      <div className="ml-[6px] flex shrink-0 items-center">
        {TOOLS.map(([label, icon]) => (
          <button key={label} aria-label={label} className={label === "십자선" ? "flex h-[17px] w-[17px] items-center justify-center bg-white" : "flex h-[17px] w-[17px] items-center justify-center"}>
            <svg width="15" height="15" viewBox="0 0 15 15" fill="none" stroke="#707070">{icon}</svg>
          </button>
        ))}
        <button aria-label="축소" className="flex w-[17px] justify-center"><svg width="12" height="12" viewBox="0 0 12 12"><path d="M0 5h12v2H0z" fill="#404040" /></svg></button>
        <button aria-label="확대" className="flex w-[17px] justify-center"><svg width="12" height="12" viewBox="0 0 12 12"><path d="M0 5h12v2H0zM5 0h2v12H5z" fill="#404040" /></svg></button>
        <button aria-label="글자 크기" className="w-[16px] text-[15px] font-bold leading-none text-[#404040]">A</button>
      </div>
    </div>
  );
}

export default function App() {
  return (
    <div className={`flex h-screen w-full flex-col bg-black pb-[3px] pt-px ${FONT}`}>
      <TitleBar />
      <main className="mx-[3px] flex min-h-0 flex-1 flex-col bg-[#d2d2d2]">
        <div className="flex h-[51px] shrink-0 flex-col gap-[3px] px-[4px] pt-[5px]">
          <Toolbar />
          <QuoteRow />
        </div>
        <div id="chart" className="flex min-h-0 flex-1 flex-col bg-[#ececec] px-[3px] pb-[3px]">
          <section className="flex min-h-0 flex-1 flex-col border border-[#909090]">
            <div className="flex min-h-0 flex-1">
              <LeftAxis />
              <div className="w-px shrink-0 bg-[#909090]" />
              <Plot />
              <div className="w-px shrink-0 bg-[#909090]" />
              <RightAxis />
            </div>
            <div className="shrink-0 border-t border-[#909090]">
              <TimeAxis />
            </div>
          </section>
          <BottomBar />
        </div>
      </main>
    </div>
  );
}
